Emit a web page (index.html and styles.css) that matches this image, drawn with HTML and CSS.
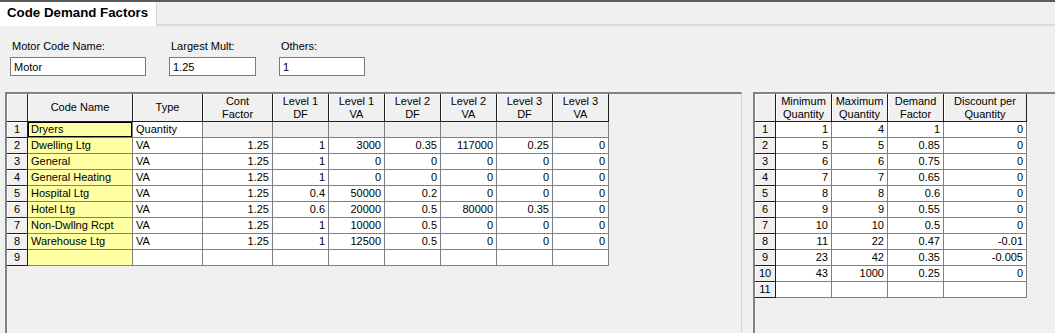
FILE: index.html
```html
<!DOCTYPE html>
<html lang="en">
<head>
  <meta charset="UTF-8">
  <title>Code Demand Factors</title>
  <link rel="stylesheet" href="styles.css">
</head>
<body>

  <div class="tabbar">
    <div class="tab">Code Demand Factors</div>
    <div class="tabrest"></div>
  </div>

  <div class="fields">
    <div class="field">
      <label for="motorName">Motor Code Name:</label>
      <input type="text" id="motorName" class="w-name" value="Motor">
    </div>
    <div class="field">
      <label for="largestMult">Largest Mult:</label>
      <input type="text" id="largestMult" class="w-mult" value="1.25">
    </div>
    <div class="field">
      <label for="others">Others:</label>
      <input type="text" id="others" class="w-others" value="1">
    </div>
  </div>

  <div class="panels">
    <div class="panel panel-left">
      <table class="grid grid-codes">
        <thead>
          <tr>
            <th class="c-rh"></th>
            <th class="c-name">Code Name</th>
            <th class="c-type">Type</th>
            <th class="c-70">Cont<br>Factor</th>
            <th class="c-56">Level 1<br>DF</th>
            <th class="c-56">Level 1<br>VA</th>
            <th class="c-56">Level 2<br>DF</th>
            <th class="c-56">Level 2<br>VA</th>
            <th class="c-56">Level 3<br>DF</th>
            <th class="c-56">Level 3<br>VA</th>
          </tr>
        </thead>
        <tbody>
          <tr><td class="rh">1</td><td class="name focus">Dryers</td><td>Quantity</td><td class="off"></td><td class="off"></td><td class="off"></td><td class="off"></td><td class="off"></td><td class="off"></td><td class="off"></td></tr>
          <tr><td class="rh">2</td><td class="name">Dwelling Ltg</td><td>VA</td><td class="num">1.25</td><td class="num">1</td><td class="num">3000</td><td class="num">0.35</td><td class="num">117000</td><td class="num">0.25</td><td class="num">0</td></tr>
          <tr><td class="rh">3</td><td class="name">General</td><td>VA</td><td class="num">1.25</td><td class="num">1</td><td class="num">0</td><td class="num">0</td><td class="num">0</td><td class="num">0</td><td class="num">0</td></tr>
          <tr><td class="rh">4</td><td class="name">General Heating</td><td>VA</td><td class="num">1.25</td><td class="num">1</td><td class="num">0</td><td class="num">0</td><td class="num">0</td><td class="num">0</td><td class="num">0</td></tr>
          <tr><td class="rh">5</td><td class="name">Hospital Ltg</td><td>VA</td><td class="num">1.25</td><td class="num">0.4</td><td class="num">50000</td><td class="num">0.2</td><td class="num">0</td><td class="num">0</td><td class="num">0</td></tr>
          <tr><td class="rh">6</td><td class="name">Hotel Ltg</td><td>VA</td><td class="num">1.25</td><td class="num">0.6</td><td class="num">20000</td><td class="num">0.5</td><td class="num">80000</td><td class="num">0.35</td><td class="num">0</td></tr>
          <tr><td class="rh">7</td><td class="name">Non-Dwllng Rcpt</td><td>VA</td><td class="num">1.25</td><td class="num">1</td><td class="num">10000</td><td class="num">0.5</td><td class="num">0</td><td class="num">0</td><td class="num">0</td></tr>
          <tr><td class="rh">8</td><td class="name">Warehouse Ltg</td><td>VA</td><td class="num">1.25</td><td class="num">1</td><td class="num">12500</td><td class="num">0.5</td><td class="num">0</td><td class="num">0</td><td class="num">0</td></tr>
          <tr><td class="rh">9</td><td class="name"></td><td></td><td></td><td></td><td></td><td></td><td></td><td></td><td></td></tr>
        </tbody>
      </table>
    </div>

    <div class="panel panel-right">
      <table class="grid grid-qty">
        <thead>
          <tr>
            <th class="c-rh"></th>
            <th class="c-56">Minimum<br>Quantity</th>
            <th class="c-56">Maximum<br>Quantity</th>
            <th class="c-56">Demand<br>Factor</th>
            <th class="c-disc">Discount per<br>Quantity</th>
          </tr>
        </thead>
        <tbody>
          <tr><td class="rh">1</td><td class="num">1</td><td class="num">4</td><td class="num">1</td><td class="num">0</td></tr>
          <tr><td class="rh">2</td><td class="num">5</td><td class="num">5</td><td class="num">0.85</td><td class="num">0</td></tr>
          <tr><td class="rh">3</td><td class="num">6</td><td class="num">6</td><td class="num">0.75</td><td class="num">0</td></tr>
          <tr><td class="rh">4</td><td class="num">7</td><td class="num">7</td><td class="num">0.65</td><td class="num">0</td></tr>
          <tr><td class="rh">5</td><td class="num">8</td><td class="num">8</td><td class="num">0.6</td><td class="num">0</td></tr>
          <tr><td class="rh">6</td><td class="num">9</td><td class="num">9</td><td class="num">0.55</td><td class="num">0</td></tr>
          <tr><td class="rh">7</td><td class="num">10</td><td class="num">10</td><td class="num">0.5</td><td class="num">0</td></tr>
          <tr><td class="rh">8</td><td class="num">11</td><td class="num">22</td><td class="num">0.47</td><td class="num">-0.01</td></tr>
          <tr><td class="rh">9</td><td class="num">23</td><td class="num">42</td><td class="num">0.35</td><td class="num">-0.005</td></tr>
          <tr><td class="rh">10</td><td class="num">43</td><td class="num">1000</td><td class="num">0.25</td><td class="num">0</td></tr>
          <tr><td class="rh">11</td><td></td><td></td><td></td><td></td></tr>
        </tbody>
      </table>
    </div>
  </div>

</body>
</html>
```

FILE: styles.css
```css
* {
  box-sizing: border-box;
}

body {
  margin: 0;
  height: 100vh;
  overflow: hidden;
  display: flex;
  flex-direction: column;
  font-family: "Liberation Sans", Arial, sans-serif;
  font-size: 11px;
  color: #000;
  background-color: #f0f0f0;
}

/* tab strip */
.tabbar {
  display: flex;
  height: 26px;
  border-top: 2px solid #5b5b5b;
}

.tab {
  width: 157px;
  background-color: #fff;
  border-right: 1px solid #d9d9d9;
  padding: 3px 0 0 7px;
  font-size: 13.3px;
  font-weight: bold;
  line-height: 16px;
}

.tabrest {
  flex: 1;
  border-bottom: 2px solid #dadada;
}

/* top inputs */
.fields {
  display: flex;
  gap: 23px;
  padding: 13px 0 0 10px;
}

.field label {
  display: block;
  padding-left: 2px;
  line-height: 14px;
}

.field input {
  display: block;
  margin-top: 4px;
  height: 19px;
  padding: 0 3px;
  border: 1px solid #7a7a7a;
  background-color: #fff;
  font: inherit;
  color: #000;
}

.w-name { width: 136px; }
.w-mult { width: 87px; }
.w-others { width: 86px; }

/* grid panels */
.panels {
  flex: 1;
  display: flex;
  gap: 11px;
  margin-top: 16px;
  padding-left: 5px;
  min-height: 0;
}

.panel {
  border-top: 2px solid #838383;
  border-left: 2px solid #838383;
}

.panel-left {
  width: 737px;
  border-right: 1px solid #d2d2d2;
}

.panel-right {
  flex: 1;
}

.grid {
  border-collapse: separate;
  border-spacing: 0;
  table-layout: fixed;
}

.grid-codes { width: 602px; }
.grid-qty { width: 272px; }

.c-rh { width: 21px; }
.c-name { width: 105px; }
.c-type { width: 70px; }
.c-70 { width: 70px; }
.c-56 { width: 56px; }
.c-disc { width: 83px; }

.grid th {
  height: 28px;
  padding: 0;
  background-color: #f0f0f0;
  border-right: 1px solid #1e1e1e;
  border-bottom: 1px solid #1e1e1e;
  box-shadow: inset 1px 1px #fff;
  font-weight: normal;
  line-height: 13px;
  text-align: center;
  vertical-align: middle;
}

.grid td {
  height: 16px;
  padding: 0 3px;
  background-color: #fff;
  border-right: 1px solid #808080;
  border-bottom: 1px solid #808080;
  line-height: 15px;
  white-space: nowrap;
  overflow: hidden;
}

.grid td.rh {
  padding: 0;
  text-align: center;
  background-color: #f0f0f0;
  border-right: 1px solid #1e1e1e;
  border-bottom: 1px solid #1e1e1e;
  box-shadow: inset 1px 1px #fff;
}

.grid td.name {
  background-color: #ffffa4;
}

.grid td.focus {
  box-shadow: inset 0 0 0 1px #000;
}

.grid td.off {
  background-color: #f0f0f0;
}

.grid td.num {
  text-align: right;
}
```
